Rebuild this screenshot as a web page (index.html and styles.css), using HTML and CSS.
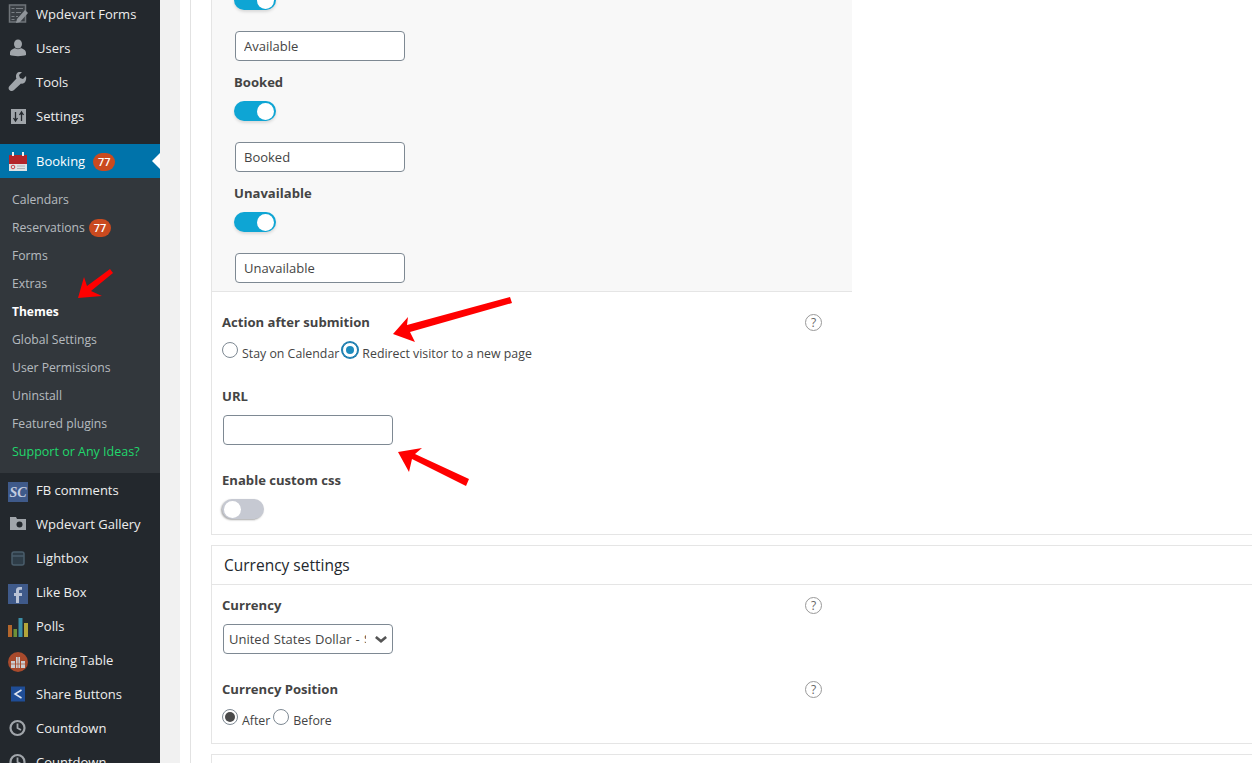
FILE: index.html
```html
<!DOCTYPE html>
<html lang="en">
<head>
    <meta charset="UTF-8">
    <meta name="viewport" content="width=device-width, initial-scale=1.0">
    <title>Booking Themes</title>
    <link rel="stylesheet" href="styles.css">
</head>
<body>
    <div class="admin">
        <nav class="sidebar">
            <ul class="menu">
                <li class="menu-item"><svg class="icon" viewBox="0 0 20 20"><path fill="#3a3f44" stroke="#6f7479" stroke-width="1.500" d="M1.500 1h16v17h-16z"/><path fill="#7b8085" d="M3.500 4h3v1h-3zM8 4h7v1H8zM3.500 8h3v1h-3zM8 8h5v1H8zM3.500 12h3v1h-3zM8 12h2v1H8zM3.500 15h3v1h-3z"/><path fill="#8f9499" d="M17 6l3 3-8 9-4 1 1-4z"/></svg><span>Wpdevart Forms</span></li>
                <li class="menu-item"><svg class="icon" viewBox="0 0 20 20"><ellipse fill="#a0a5aa" cx="10" cy="6" rx="4" ry="4.500"/><path fill="#a0a5aa" d="M2 15c0-3 3-4 5-5 1 1.500 5 1.500 6 0 2 1 5 2 5 5v2c-3 1.500-13 1.500-16 0z"/></svg><span>Users</span></li>
                <li class="menu-item"><svg class="icon" viewBox="0 0 20 20"><path fill="#a0a5aa" d="M18 4l-3 3-3-1-1-3 3-3c-3-1-6 1-6 4 0 1 0 2 .5 2.500L1.500 14c-1.500 1.500-1 3.500.5 4.500 1.500 1 3 .5 4-.5l7-6.500c3 1 6-2 5-7.500z"/></svg><span>Tools</span></li>
                <li class="menu-item"><svg class="icon" viewBox="0 0 20 20"><path fill="#a0a5aa" d="M3 3h15v15H3z"/><path fill="none" stroke="#23282d" stroke-width="1.300" d="M7.500 6v8M5.500 12l2 3 2-3M13.500 15V7M11.500 9l2-3 2 3"/></svg><span>Settings</span></li>
                <li class="menu-item menu-current"><svg class="icon" viewBox="0 0 20 20"><path fill="#dfe3e6" d="M1 6h18v13H1z"/><path fill="#b3242a" d="M1 3h18v9H1z"/><path fill="#eee" d="M4 0h2v4H4zM14 0h2v4h-2z"/><circle cx="5" cy="15" r="1.800" fill="none" stroke="#c9434a"/><path stroke="#aeb4b8" d="M9 14h8M9 16.500h8"/></svg><span>Booking</span><span class="badge">77</span></li>
                <li class="submenu">
                    <a>Calendars</a>
                    <a>Reservations <span class="badge">77</span></a>
                    <a>Forms</a>
                    <a>Extras</a>
                    <a class="sub-current">Themes</a>
                    <a>Global Settings</a>
                    <a>User Permissions</a>
                    <a>Uninstall</a>
                    <a>Featured plugins</a>
                    <a class="sub-support">Support or Any Ideas?</a>
                </li>
                <li class="menu-item"><svg class="icon icon-low" viewBox="0 0 20 20"><path fill="#3f5a8a" d="M0 0h20v20H0z"/><text x="10" y="14.500" class="sc-text">SC</text></svg><span>FB comments</span></li>
                <li class="menu-item"><svg class="icon" viewBox="0 0 20 20"><path fill="#a0a5aa" d="M2 3h6l1 2h9v11H2z"/><circle cx="11.500" cy="10.500" r="3" fill="#23282d"/></svg><span>Wpdevart Gallery</span></li>
                <li class="menu-item"><svg class="icon" viewBox="0 0 20 20"><rect x="4" y="4" width="12" height="13" rx="2" fill="#2e3d48" stroke="#4a5d6b" stroke-width="1.500"/><path stroke="#4a5d6b" stroke-width="1.500" d="M4 8h12"/></svg><span>Lightbox</span></li>
                <li class="menu-item"><svg class="icon icon-low" viewBox="0 0 20 20"><path fill="#3f5a8a" d="M0 0h20v20H0z"/><path fill="#b9c3d6" d="M11 19v-7h3v-3h-3V7c0-1 .5-1.300 1.500-1.300H14V3h-2.500C9 3 8 4.500 8 6.500V9H6v3h2v7z"/></svg><span>Like Box</span></li>
                <li class="menu-item"><svg class="icon icon-low" viewBox="0 0 20 20"><path fill="#b3662c" d="M0 7h4v12H0z"/><path fill="#6d9138" d="M5.500 11h3.500v8H5.500z"/><path fill="#3b8fa8" d="M10.500 0h4v19h-4z"/><path fill="#b4a53a" d="M16 5h4v14h-4z"/></svg><span>Polls</span></li>
                <li class="menu-item"><svg class="icon icon-low" viewBox="0 0 20 20"><circle cx="10" cy="10" r="10" fill="#a84a2c"/><path fill="#c9ccd0" d="M3 9h4v7H3zM8 5h4v11H8zM13 9h4v7h-4z"/><path stroke="#a84a2c" stroke-width=".7" d="M3 12h14M10 5v11"/></svg><span>Pricing Table</span></li>
                <li class="menu-item"><svg class="icon" viewBox="0 0 20 20"><path fill="#1f4d96" d="M3 2.500h14v15H3z"/><path fill="none" stroke="#dfe6f2" stroke-width="1.500" d="M13.500 6L7 10l6.500 4"/></svg><span>Share Buttons</span></li>
                <li class="menu-item"><svg class="icon" viewBox="0 0 20 20"><circle cx="9.500" cy="10" r="7" fill="none" stroke="#a0a5aa" stroke-width="2.200"/><path fill="none" stroke="#a0a5aa" stroke-width="1.800" d="M9.500 5.500V10l3.500 2"/></svg><span>Countdown</span></li>
                <li class="menu-item"><svg class="icon" viewBox="0 0 20 20"><circle cx="9.500" cy="10" r="7" fill="none" stroke="#a0a5aa" stroke-width="2.200"/><path fill="none" stroke="#a0a5aa" stroke-width="1.800" d="M9.500 5.500V10l3.500 2"/></svg><span>Countdown</span></li>
            </ul>
        </nav>

        <div class="gutter"></div>

        <main class="content">
            <section class="panel panel-first">
                <div class="status-box">
                    <span class="toggle toggle-on"></span>
                    <input type="text" class="text-input status-input" value="Available">
                    <label class="field-label">Booked</label>
                    <span class="toggle toggle-on"></span>
                    <input type="text" class="text-input status-input" value="Booked">
                    <label class="field-label">Unavailable</label>
                    <span class="toggle toggle-on"></span>
                    <input type="text" class="text-input status-input" value="Unavailable">
                </div>
                <div class="panel-body action-body">
                    <div class="field-head">
                        <label class="field-label">Action after submition</label>
                        <span class="help">?</span>
                    </div>
                    <div class="radio-row">
                        <input type="radio" name="action" class="radio">
                        <span>Stay on Calendar</span>
                        <input type="radio" name="action" class="radio radio-focus" checked>
                        <span>Redirect visitor to a new page</span>
                    </div>
                    <label class="field-label url-label">URL</label>
                    <input type="text" class="text-input url-input">
                    <label class="field-label css-label">Enable custom css</label>
                    <span class="toggle toggle-off"></span>
                </div>
            </section>

            <section class="panel">
                <h2 class="panel-title">Currency settings</h2>
                <div class="panel-body currency-body">
                    <div class="field-head">
                        <label class="field-label">Currency</label>
                        <span class="help">?</span>
                    </div>
                    <div class="select-wrap">
                        <select class="select">
                            <option>United States Dollar - $</option>
                        </select>
                        <svg class="select-arrow" viewBox="0 0 14 8"><path fill="none" stroke="#555" stroke-width="3" d="M1 1l6 5 6-5"/></svg>
                    </div>
                    <div class="field-head position-head">
                        <label class="field-label">Currency Position</label>
                        <span class="help">?</span>
                    </div>
                    <div class="radio-row">
                        <input type="radio" name="position" class="radio radio-dark" checked>
                        <span>After</span>
                        <input type="radio" name="position" class="radio">
                        <span>Before</span>
                    </div>
                </div>
            </section>

            <section class="panel panel-last"></section>
        </main>
    </div>

    <!-- red arrows drawn on top of the screenshot -->
    <svg class="arrows" viewBox="0 0 1252 763">
        <path fill="#f00" d="M78 298l6-21 3 9 23-17 3 4-22 18 11 5z"/>
        <path fill="#f00" d="M393 334l15-17-1 8 103-28 2 6-102 29 5 10z"/>
        <path fill="#f00" d="M398 452l24-4-7 6 54 25-3 7-54-27-3 13z"/>
    </svg>
</body>
</html>
```

FILE: styles.css
```css
* {
    box-sizing: border-box;
}

html, body {
    height: 100%;
}

body {
    margin: 0;
    overflow: hidden;
    background-color: #ffffff;
    font-family: 'Open Sans', 'Noto Sans', sans-serif;
    font-size: 13px;
    color: #444;
}

.admin {
    display: flex;
    height: 763px;
    overflow: hidden;
}

/* sidebar */
.sidebar {
    width: 160px;
    flex-shrink: 0;
    background-color: #23282d;
}

.menu {
    list-style: none;
    margin: -3px 0 0;
    padding: 0;
}

.menu-item {
    display: flex;
    align-items: center;
    height: 34px;
    padding-left: 8px;
    color: #eee;
    font-size: 13px;
}

.menu-item .icon {
    width: 20px;
    height: 20px;
    margin-right: 8px;
    flex-shrink: 0;
}

.menu-item .icon-low {
    margin-top: 4px;
}

.menu-item:nth-child(4) {
    margin-bottom: 11px;
}

.menu-current {
    position: relative;
    background-color: #0073aa;
    color: #fff;
}

.menu-current .icon {
    margin-top: 2px;
}

.menu-current::after {
    content: "";
    position: absolute;
    right: 0;
    top: 9px;
    border: 8px solid transparent;
    border-right-color: #fff;
    border-left-width: 0;
}

.badge {
    display: inline-block;
    width: 22px;
    height: 18px;
    margin-left: 1px;
    border-radius: 9px;
    background-color: #ca4a1f;
    color: #fff;
    font-size: 11px;
    font-weight: 600;
    line-height: 18px;
    text-align: center;
}

.menu-item .badge {
    margin-left: 8px;
    margin-top: 2px;
}

.submenu {
    padding: 8px 0 7px;
    background-color: #32373c;
}

.submenu a {
    display: block;
    height: 28px;
    padding-left: 12px;
    color: rgba(240, 245, 250, 0.7);
    font-size: 12.2px;
    line-height: 28px;
}

.submenu a.sub-current {
    color: #fff;
    font-size: 12px;
    font-weight: 700;
}

.submenu a.sub-support {
    color: #21d76c;
    font-size: 12.5px;
}

.sc-text {
    fill: #c3cde0;
    font-family: 'Liberation Serif', serif;
    font-size: 14px;
    font-style: italic;
    font-weight: 700;
    text-anchor: middle;
}

/* page */
.gutter {
    width: 20px;
    flex-shrink: 0;
    background-color: #f1f1f1;
}

.content {
    flex: 1;
    min-width: 0;
    margin-left: 10px;
    padding-left: 20px;
    border-left: 1px solid #e2e2e2;
}

.panel {
    margin-top: 10px;
    border: 1px solid #e5e5e5;
    border-right: 0;
    background-color: #fff;
}

.panel-first {
    margin-top: -20px;
    border-top: 0;
}

.panel-last {
    height: 40px;
}

.status-box {
    display: flex;
    flex-direction: column;
    align-items: flex-start;
    width: 640px;
    padding: 10px 0 8px 22px;
    background-color: #f8f8f8;
    border-bottom: 1px solid #e5e5e5;
}

.panel-body {
    display: flex;
    flex-direction: column;
    align-items: flex-start;
    padding-left: 10px;
}

.action-body {
    padding-top: 21px;
    padding-bottom: 15px;
}

.currency-body {
    padding-top: 11px;
    padding-bottom: 16px;
}

.panel-title {
    height: 39px;
    margin: 0;
    padding-left: 12px;
    border-bottom: 1px solid #e5e5e5;
    color: #23282d;
    font-size: 15.5px;
    font-weight: 400;
    line-height: 38px;
}

.field-label {
    display: block;
    color: #444;
    font-size: 13.1px;
    font-weight: 700;
    line-height: 18px;
}

.status-box .field-label {
    margin-top: 12px;
    margin-bottom: 10px;
}

.field-head {
    display: flex;
    justify-content: space-between;
    align-items: flex-start;
    width: 600px;
    height: 18px;
}

.position-head {
    margin-top: 26px;
}

.url-label {
    margin-top: 27px;
    margin-bottom: 10px;
}

.css-label {
    margin-top: 26px;
    margin-bottom: 10px;
}

.help {
    display: block;
    width: 17px;
    height: 17px;
    margin-top: 1px;
    border: 1px solid #999;
    border-radius: 50%;
    color: #666;
    font-size: 12px;
    line-height: 15px;
    text-align: center;
}

/* inputs */
.text-input {
    display: block;
    width: 170px;
    height: 30px;
    padding: 0 8px;
    border: 1px solid #7e8993;
    border-radius: 4px;
    background-color: #fff;
    color: #444;
    font-family: inherit;
    font-size: 13px;
}

.status-input {
    margin-left: 1px;
    margin-top: 21px;
}

.url-input {
    margin-left: 1px;
}

.toggle {
    position: relative;
    display: block;
    width: 42px;
    height: 20px;
    border-radius: 10px;
    box-shadow: 0 2px 3px rgba(0, 0, 0, 0.12);
}

.toggle::after {
    content: "";
    position: absolute;
    top: 1.5px;
    width: 17px;
    height: 17px;
    border-radius: 50%;
    background-color: #fff;
}

.toggle-on {
    background-color: #0ea5d4;
}

.toggle-on::after {
    right: 2px;
}

.toggle-off {
    background-color: #c6c9d2;
    box-shadow: -1px 1px 2px rgba(0, 0, 0, 0.35);
}

.toggle-off::after {
    left: 2px;
}

.radio-row {
    display: flex;
    align-items: center;
    height: 20px;
    margin-top: 9px;
    font-size: 12.35px;
}

.radio-row span {
    margin-top: 7px;
}

.radio {
    appearance: none;
    position: relative;
    width: 16px;
    height: 16px;
    margin: 0 4px 0 0;
    border: 1px solid #7e8993;
    border-radius: 50%;
    background-color: #fff;
}

.radio-row span + .radio {
    margin-left: 3px;
}

.radio:checked::before {
    content: "";
    position: absolute;
    top: 3px;
    left: 3px;
    width: 8px;
    height: 8px;
    border-radius: 50%;
    background-color: #1e8cbe;
}

.radio-focus {
    border-color: #1e7fb0;
    box-shadow: 0 0 0 1px #1e7fb0;
}

.radio-dark:checked::before {
    width: 10px;
    height: 10px;
    top: 2px;
    left: 2px;
    background-color: #4a4a4a;
}

.select-wrap {
    position: relative;
    width: 170px;
    height: 30px;
    margin-left: 1px;
    margin-top: 10px;
}

.select {
    appearance: none;
    display: block;
    width: 100%;
    height: 100%;
    padding: 0 26px 0 5px;
    border: 1px solid #7e8993;
    border-radius: 4px;
    background-color: #fff;
    color: #444;
    font-family: inherit;
    font-size: 13px;
    word-spacing: 0.8px;
}

.select-arrow {
    position: absolute;
    right: 6px;
    top: 12px;
    width: 12px;
    height: 7px;
}

/* annotation layer */
.arrows {
    position: absolute;
    top: 0;
    left: 0;
    width: 1252px;
    height: 763px;
    pointer-events: none;
}
```
